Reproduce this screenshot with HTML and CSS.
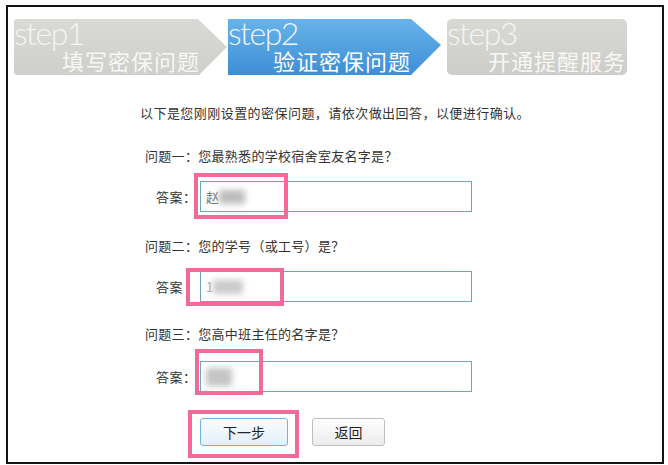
FILE: index.html
```html
<!DOCTYPE html>
<html lang="zh-CN">
<head>
<meta charset="utf-8">
<title>验证密保问题</title>
<link rel="stylesheet" href="styles.css">
</head>
<body>
<div class="frame">
  <div class="steps">
    <div class="step step-done">
      <span class="step-en">step1</span>
      <span class="step-cn">填写密保问题</span>
    </div>
    <div class="step step-active">
      <span class="step-en">step2</span>
      <span class="step-cn">验证密保问题</span>
    </div>
    <div class="step step-next">
      <span class="step-en">step3</span>
      <span class="step-cn">开通提醒服务</span>
    </div>
  </div>

  <div class="content">
    <p class="intro">以下是您刚刚设置的密保问题，请依次做出回答，以便进行确认。</p>

    <p class="question q1">问题一：您最熟悉的学校宿舍室友名字是？</p>
    <div class="answer a1">
      <span class="label">答案：</span>
      <div class="field">
        <span class="value"><span class="plain">赵</span><span class="blur b1"></span></span>
        <span class="mark m1"></span>
      </div>
    </div>

    <p class="question q2">问题二：您的学号（或工号）是？</p>
    <div class="answer a2">
      <span class="label">答案</span>
      <div class="field">
        <span class="value"><span class="plain faint">1</span><span class="blur b2"></span></span>
        <span class="mark m2"></span>
      </div>
    </div>

    <p class="question q3">问题三：您高中班主任的名字是？</p>
    <div class="answer a3">
      <span class="label">答案：</span>
      <div class="field">
        <span class="value"><span class="blur b3"></span></span>
        <span class="mark m3"></span>
      </div>
    </div>

    <div class="buttons">
      <div class="btn-wrap">
        <button class="btn btn-primary">下一步</button>
        <span class="mark m4"></span>
      </div>
      <button class="btn btn-back">返回</button>
    </div>
  </div>
</div>
</body>
</html>
```

FILE: styles.css
```css
html, body {
  margin: 0;
  padding: 0;
  background: #fff;
}

body {
  font-family: "Noto Sans CJK SC", "Liberation Sans", sans-serif;
  color: #333;
}

.frame {
  margin: 5px 0 0 6px;
  width: 654px;
  height: 455px;
  border: 2px solid #141414;
  position: relative;
}

.steps {
  display: flex;
  padding: 12px 0 0 6px;
  height: 56px;
}

.step {
  position: relative;
  height: 56px;
}

.step-done {
  width: 214px;
  background: linear-gradient(#d9d9d5, #cfcfcb);
  clip-path: polygon(2px 0, 184px 0, 213px 28px, 185px 56px, 2px 56px, 0 54px, 0 2px);
}

.step-active {
  width: 213px;
  background: linear-gradient(#68b3ea, #3d8ed6);
  clip-path: polygon(0 0, 183px 0, 213px 26px, 183px 56px, 0 56px);
}

.step-next {
  width: 180px;
  margin-left: 6px;
  border-radius: 5px;
  background: linear-gradient(#d8d8d4, #cdcdc9);
}

.step-en {
  position: absolute;
  left: 0;
  top: 0;
  font-family: "Lato", "DejaVu Sans", sans-serif;
  font-weight: 300;
  font-size: 32px;
  line-height: 28px;
  letter-spacing: -1.5px;
  color: #f4f4f2;
}

.step-active .step-en {
  color: #eef6fd;
}

.step-cn {
  position: absolute;
  top: 29px;
  right: 28px;
  font-size: 22px;
  line-height: 25px;
  color: #f7f7f5;
  letter-spacing: 1px;
}

.step-active .step-cn {
  right: 30px;
  color: #fff;
}

.step-next .step-cn {
  right: 1px;
}

.content {
  padding-left: 132px;
}

.intro {
  margin: 28px 0 0 0;
  font-size: 13px;
  line-height: 20px;
  letter-spacing: 0.45px;
}

.question {
  margin: 0 0 0 5px;
  font-size: 13px;
  line-height: 20px;
  letter-spacing: 0.3px;
}

.q1 { margin-top: 23px; }
.q2 { margin-top: 24px; }
.q3 { margin-top: 22px; }

.answer {
  display: flex;
  align-items: center;
  margin-left: 16px;
}

.a1 { margin-top: 15px; }
.a2 { margin-top: 15px; }
.a3 { margin-top: 17px; }

.label {
  width: 44px;
  font-size: 13px;
  line-height: 20px;
  letter-spacing: 0.5px;
}

.field {
  position: relative;
  width: 270px;
  height: 29px;
  border: 1px solid #6ea7bd;
  background: #fff;
}

.value {
  display: flex;
  align-items: center;
  height: 29px;
  padding-left: 5px;
}

.plain {
  font-size: 13px;
  color: #777;
}

.plain.faint {
  color: #aaa;
}

.blur {
  display: inline-block;
  height: 14px;
  background: #bdbdbd;
  filter: blur(3px);
}

.b1 { width: 26px; }
.b2 { width: 30px; background: #cacaca; }
.b3 { width: 26px; height: 18px; background: #c4c4c4; }

.mark {
  position: absolute;
  border: 4px solid #f06c97;
  box-sizing: border-box;
  pointer-events: none;
}

.m1 { left: -7px; top: -9px; width: 94px; height: 46px; }
.m2 { left: -15px; top: -4px; width: 98px; height: 38px; }
.m3 { left: -6px; top: -13px; width: 68px; height: 46px; }
.m4 { left: -12px; top: -8px; width: 111px; height: 48px; }

.buttons {
  display: flex;
  gap: 24px;
  margin: 26px 0 0 60px;
}

.btn-wrap {
  position: relative;
}

.btn {
  display: block;
  height: 28px;
  font-family: "Noto Sans CJK SC", sans-serif;
  font-size: 14px;
  color: #222;
  border-radius: 3px;
  padding: 0;
}

.btn-primary {
  width: 88px;
  border: 1px solid #74b1e4;
  background: linear-gradient(#fbfdff, #e4eef8);
}

.btn-back {
  width: 73px;
  border: 1px solid #bdbdbd;
  background: linear-gradient(#ffffff, #ececec);
}
```
